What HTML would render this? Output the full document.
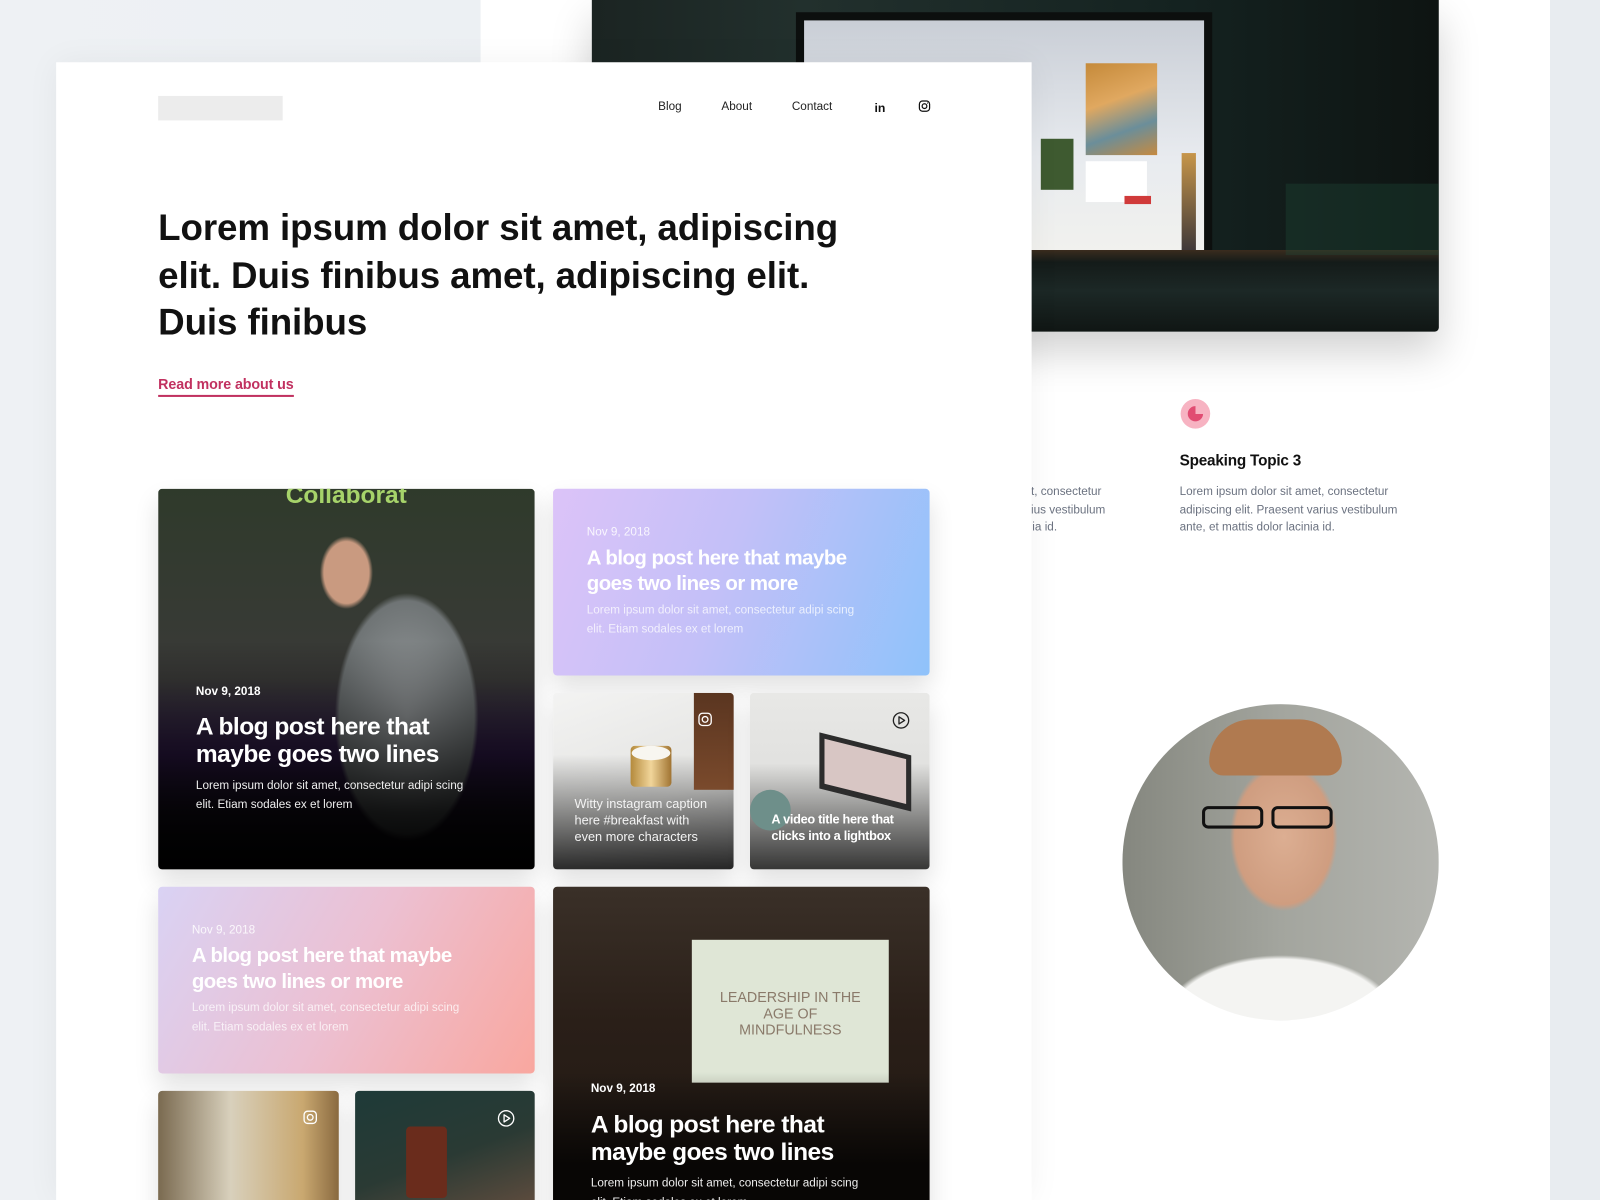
<!DOCTYPE html>
<html><head><meta charset="utf-8">
<style>
*{margin:0;padding:0;box-sizing:border-box}
html,body{width:1600px;height:1200px;overflow:hidden;background:#eaeef2;font-family:"Liberation Sans",sans-serif}
#w{position:absolute;left:0;top:0;width:1568px;height:1176px;transform:scale(1.020408);transform-origin:0 0;overflow:hidden;background:linear-gradient(90deg,#eef1f4,#e8ecf0)}
.a{position:absolute}
.back{left:471px;top:0;width:1048px;height:1176px;background:#fff}
.stage{left:580px;top:0;width:830px;height:325px;box-shadow:0 20px 40px rgba(0,0,0,.18);border-radius:0 0 4px 4px;overflow:hidden;
background:linear-gradient(90deg,#1b2422 0%,#22302d 25%,#142220 70%,#0e1412 100%)}
.screen{left:208px;top:20px;width:392px;height:225px;background:linear-gradient(180deg,#c9ced6,#e8ebef 60%,#f1f1ee);}
.front{left:55px;top:61px;width:956px;height:1115px;background:#fff;box-shadow:0 0 30px rgba(0,0,0,.05)}
.nav{font-size:11.5px;color:#222;top:99px}
h1{position:absolute;left:155px;top:200px;font-size:36px;line-height:46.5px;font-weight:700;letter-spacing:-.1px;color:#111;white-space:nowrap}
.rm{left:155px;top:368px;color:#c13160;font-weight:700;font-size:14px;letter-spacing:-.1px;padding-bottom:3px;border-bottom:2px solid #c13160}
.card{position:absolute;border-radius:4px;overflow:hidden;box-shadow:0 12px 24px rgba(0,0,0,.12)}
.date{position:absolute;font-size:11.5px;font-weight:700}
.tt{position:absolute;font-weight:700;letter-spacing:-.5px;white-space:nowrap}
.bd{position:absolute;font-size:11.5px;line-height:18.5px;white-space:nowrap}
.g{color:#6b7280;font-size:11.5px;line-height:17.6px}
</style></head><body><div id="w">
<div class="a back"></div>
<div class="a stage">
 <div class="a" style="left:200px;top:12px;width:408px;height:240px;background:#0c0f0e"></div>
 <div class="a screen"></div>
 <div class="a" style="left:484px;top:62px;width:70px;height:90px;background:linear-gradient(160deg,#c58a3a,#e0a860 40%,#6b8e9a 70%,#c68a40)"></div>
 <div class="a" style="left:440px;top:136px;width:32px;height:50px;background:#3e5a30"></div>
 <div class="a" style="left:484px;top:158px;width:60px;height:40px;background:#fff"></div>
 <div class="a" style="left:522px;top:192px;width:26px;height:8px;background:#d03a3a"></div>
 <div class="a" style="left:578px;top:150px;width:14px;height:110px;background:linear-gradient(#c7964a,#2a2a36)"></div>
 <div class="a" style="left:0;top:245px;width:830px;height:80px;background:linear-gradient(180deg,#3a2c1e 0,#141b19 12px,#1c2826 50%,#101614)"></div>
 <div class="a" style="left:680px;top:180px;width:150px;height:70px;background:#1f4a38;opacity:.35"></div>
</div>
<div class="a" style="left:1157px;top:391px;width:29px;height:29px;border-radius:50%;background:#f7b3c2"></div>
<div class="a" style="left:1164px;top:398px;width:15px;height:15px;border-radius:50%;background:conic-gradient(#f7b3c2 0 25%,#e14c72 25% 100%)"></div>
<div class="a" style="left:1156px;top:443px;font-size:15px;font-weight:700;color:#111;letter-spacing:-.2px">Speaking Topic 3</div>
<div class="a g" style="left:1156px;top:474px">Lorem ipsum dolor sit amet, consectetur<br>adipiscing elit. Praesent varius vestibulum<br>ante, et mattis dolor lacinia id.</div>
<div class="a g" style="left:988px;top:474px">amet, consectetur<br>t varius vestibulum<br>lacinia id.</div>
<div class="a" style="left:1100px;top:690px;width:310px;height:310px;border-radius:50%;overflow:hidden;background:radial-gradient(ellipse 80px 110px at 51% 42%,#dcae92 0%,#cf9d80 60%,transparent 66%),radial-gradient(ellipse 180px 100px at 50% 100%,#f4f4f2 60%,transparent 64%),linear-gradient(90deg,#85877f,#a3a59e 50%,#b4b5b0)">
 <div class="a" style="left:78px;top:100px;width:60px;height:22px;border:3px solid #111;border-radius:6px"></div>
 <div class="a" style="left:146px;top:100px;width:60px;height:22px;border:3px solid #111;border-radius:6px"></div>
 <div class="a" style="left:85px;top:15px;width:130px;height:55px;border-radius:60px 60px 20px 20px;background:#b07a50"></div>
</div>

<div class="a front"></div>
<div class="a" style="left:155px;top:94px;width:122px;height:24px;background:#ececec"></div>
<div class="a nav" style="left:645px">Blog</div>
<div class="a nav" style="left:707px">About</div>
<div class="a nav" style="left:776px">Contact</div>
<div class="a" style="left:857px;top:99px;font-size:12px;font-weight:700;color:#111">in</div>
<svg class="a" style="left:900px;top:98px" width="12" height="12" viewBox="0 0 12 12"><rect x="1" y="1" width="10" height="10" rx="3" fill="none" stroke="#111" stroke-width="1.2"/><circle cx="6" cy="6" r="2.3" fill="none" stroke="#111" stroke-width="1.2"/><circle cx="9" cy="3" r=".6" fill="#111"/></svg>
<h1>Lorem ipsum dolor sit amet, adipiscing<br>elit. Duis finibus amet, adipiscing elit.<br>Duis finibus</h1>
<div class="a rm">Read more about us</div>

<div class="card" style="left:155px;top:479px;width:369px;height:373px;background:linear-gradient(180deg,rgba(0,0,0,0) 40%,rgba(0,0,0,.85) 85%,#000),radial-gradient(ellipse 110px 190px at 66% 60%,#9a9ea0 0%,#6f7475 60%,transparent 64%),radial-gradient(ellipse 40px 55px at 50% 22%,#c99a80 55%,transparent 65%),linear-gradient(180deg,#2f3a2b,#3a3a38 50%,#301a4a 70%,#111)">
 <div class="a" style="left:125px;top:0;width:150px;height:20px;color:#a6d36a;font-size:24px;font-weight:700;line-height:14px">Collaborat</div>
 <div class="date" style="left:37px;top:193px;color:#fff">Nov 9, 2018</div>
 <div class="tt" style="left:37px;top:220px;font-size:24px;line-height:27px;color:#fff">A blog post here that<br>maybe goes two lines</div>
 <div class="bd" style="left:37px;top:282px;color:#eee">Lorem ipsum dolor sit amet, consectetur adipi scing<br>elit. Etiam sodales ex et lorem</div>
</div>
<div class="card" style="left:542px;top:479px;width:369px;height:183px;background:linear-gradient(110deg,#dcc3f8 0%,#c3c0f8 45%,#8fc2fa 100%)">
 <div class="date" style="left:33px;top:37px;color:rgba(255,255,255,.85);font-weight:400">Nov 9, 2018</div>
 <div class="tt" style="left:33px;top:56px;font-size:20px;line-height:25px;color:#fff">A blog post here that maybe<br>goes two lines or more</div>
 <div class="bd" style="left:33px;top:110px;color:rgba(255,255,255,.75)">Lorem ipsum dolor sit amet, consectetur adipi scing<br>elit. Etiam sodales ex et lorem</div>
</div>
<div class="card" style="left:542px;top:679px;width:177px;height:173px;background:linear-gradient(180deg,rgba(0,0,0,0) 35%,rgba(0,0,0,.8) 100%),linear-gradient(160deg,#f3f3f2,#e3e3e1 60%,#bdbdbd)">
 <div class="a" style="left:76px;top:52px;width:40px;height:40px;border-radius:4px;background:linear-gradient(90deg,#b48a3c,#f1d59a,#a07432)"></div>
 <div class="a" style="left:77px;top:52px;width:38px;height:14px;border-radius:50%;background:#f8f6f0"></div>
 <div class="a" style="left:138px;top:0;width:40px;height:95px;background:linear-gradient(#5a3520,#7a4a2c)"></div>
 <svg class="a" style="left:142px;top:19px" width="14" height="14" viewBox="0 0 14 14"><rect x="1" y="1" width="12" height="12" rx="3.5" fill="none" stroke="#fff" stroke-width="1.3"/><circle cx="7" cy="7" r="2.8" fill="none" stroke="#fff" stroke-width="1.3"/></svg>
 <div class="bd" style="left:21px;top:101px;font-size:12.5px;line-height:16px;color:#f3f3f3">Witty instagram caption<br>here #breakfast with<br>even more characters</div>
</div>
<div class="card" style="left:735px;top:679px;width:176px;height:173px;background:linear-gradient(180deg,rgba(0,0,0,0) 40%,rgba(0,0,0,.75) 100%),linear-gradient(180deg,#e8e8e6,#d8d8d6)">
 <div class="a" style="left:68px;top:50px;width:90px;height:55px;background:#2c2c2c;transform:skewY(14deg)"></div>
 <div class="a" style="left:73px;top:55px;width:80px;height:44px;background:#d8c6c4;transform:skewY(14deg)"></div>
 <div class="a" style="left:0;top:95px;width:40px;height:40px;border-radius:50%;background:#6e8f8a"></div>
 <svg class="a" style="left:139px;top:18px" width="18" height="18" viewBox="0 0 18 18"><circle cx="9" cy="9" r="7.5" fill="none" stroke="#222" stroke-width="1.3"/><path d="M7 5.5v7l5.5-3.5z" fill="none" stroke="#222" stroke-width="1.3" stroke-linejoin="round"/></svg>
 <div class="bd" style="left:21px;top:116px;font-size:12.5px;line-height:16px;color:#fff;font-weight:700;letter-spacing:-.3px">A video title here that<br>clicks into a lightbox</div>
</div>
<div class="card" style="left:155px;top:869px;width:369px;height:183px;background:linear-gradient(120deg,#d9d2f4 0%,#ecc0d2 50%,#f9a79f 100%)">
 <div class="date" style="left:33px;top:37px;color:rgba(255,255,255,.85);font-weight:400">Nov 9, 2018</div>
 <div class="tt" style="left:33px;top:56px;font-size:20px;line-height:25px;color:#fff">A blog post here that maybe<br>goes two lines or more</div>
 <div class="bd" style="left:33px;top:110px;color:rgba(255,255,255,.75)">Lorem ipsum dolor sit amet, consectetur adipi scing<br>elit. Etiam sodales ex et lorem</div>
</div>
<div class="card" style="left:542px;top:869px;width:369px;height:330px;background:linear-gradient(180deg,#3a3028,#2a1f18 40%,#1e1712)">
 <div class="a" style="left:136px;top:52px;width:193px;height:140px;background:#dfe6d6"></div>
 <div class="a" style="left:136px;top:100px;width:193px;font-size:14px;line-height:16px;color:#8a7a6a;text-align:center">LEADERSHIP IN THE<br>AGE OF<br>MINDFULNESS</div>
 <div class="a" style="left:0;top:0;width:369px;height:330px;background:linear-gradient(180deg,rgba(0,0,0,0) 55%,rgba(0,0,0,.75) 82%)"></div>
 <div class="date" style="left:37px;top:192px;color:#fff">Nov 9, 2018</div>
 <div class="tt" style="left:37px;top:220px;font-size:24px;line-height:27px;color:#fff">A blog post here that<br>maybe goes two lines</div>
 <div class="bd" style="left:37px;top:282px;color:#eee">Lorem ipsum dolor sit amet, consectetur adipi scing<br>elit. Etiam sodales ex et lorem</div>
</div>
<div class="card" style="left:155px;top:1069px;width:177px;height:130px;background:linear-gradient(90deg,#7a6a50,#d8d0bc 40%,#c9a870 80%,#8a6a40)">
 <svg class="a" style="left:142px;top:19px" width="14" height="14" viewBox="0 0 14 14"><rect x="1" y="1" width="12" height="12" rx="3.5" fill="none" stroke="#fff" stroke-width="1.3"/><circle cx="7" cy="7" r="2.8" fill="none" stroke="#fff" stroke-width="1.3"/></svg>
</div>
<div class="card" style="left:348px;top:1069px;width:176px;height:130px;background:linear-gradient(160deg,#1e3a38,#2a3a34 50%,#6a5040)">
 <div class="a" style="left:50px;top:35px;width:40px;height:70px;border-radius:4px;background:#6a2c1c"></div>
 <svg class="a" style="left:139px;top:18px" width="18" height="18" viewBox="0 0 18 18"><circle cx="9" cy="9" r="7.5" fill="none" stroke="#fff" stroke-width="1.3"/><path d="M7 5.5v7l5.5-3.5z" fill="none" stroke="#fff" stroke-width="1.3" stroke-linejoin="round"/></svg>
</div>
</div></body></html>
